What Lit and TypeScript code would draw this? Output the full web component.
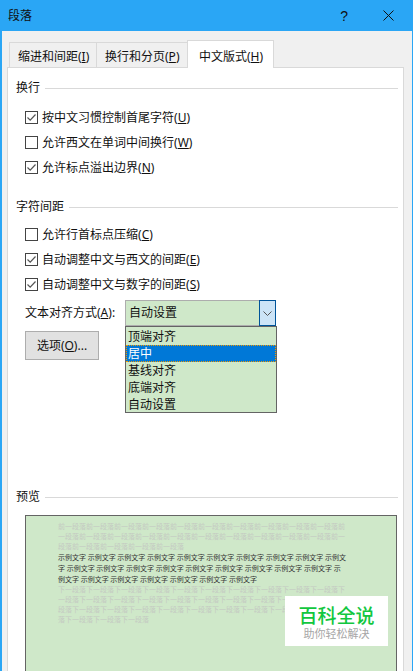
import { LitElement, html, svg, css } from "lit";
import { customElement } from "lit/decorators.js";

@customElement("app-root")
export class AppRoot extends LitElement {
  static styles = css`
    :host { display: block; width: 413px; height: 671px; overflow: hidden; font: 12px/16px "Noto Sans", "Noto Sans CJK SC", sans-serif; color: #111; }
    * { box-sizing: border-box; }
    .win { position: relative; width: 413px; height: 671px; background: #f0f0f0; border-left: 2px solid #2aa6f5; border-right: 1px solid #2aa6f5; display: flex; flex-direction: column; overflow: hidden; }
    .title { height: 31px; margin: 0 -1px 0 -2px; background: #2aa6f5; display: flex; align-items: center; padding: 0 19px 0 8px; flex: none; }
    .title .name { flex: 1; font-size: 12px; }
    .title .help { font-size: 14px; margin-right: 35px; font-family: "Liberation Sans", sans-serif; }
    .title svg { display: block; }
    .tabs { display: flex; align-items: flex-end; height: 36px; padding-left: 7px; flex: none; }
    .tab { height: 25px; padding: 6px 8px 0; border: 1px solid #d9d9d9; border-bottom: none; margin-right: -1px; white-space: nowrap; background: #f0f0f0; }
    .tab.t1 { width: 88px; }
    .tab.t2 { width: 92px; }
    .tab.on { height: 28px; width: 87px; background: #fff; margin-bottom: -1px; position: relative; z-index: 1; padding: 8px 0 0 11px; border-width: 1px 1px 0; }
    .panel { flex: 1; margin: 0 8px 0 5px; background: #fff; border: 1px solid #d9d9d9; padding: 12px 5px 0 8px; position: relative; }
    .head { display: flex; align-items: center; gap: 5px; height: 16px; }
    .head::after { content: ""; flex: 1; height: 1px; background: #d9d9d9; }
    .group { margin: 9px 0 0 9px; }
    .group.second { margin-top: 7px; }
    .row { height: 25px; display: flex; align-items: center; gap: 4px; white-space: nowrap; }
    .box { width: 13px; height: 13px; flex: none; display: block; }
    u { text-underline-offset: 1px; }
    .gap2 { margin-top: 19px; }
    .combo-row { display: flex; align-items: center; margin: 3px 0 0 9px; height: 26px; position: relative; }
    .combo-row label { width: 100px; flex: none; }
    .combo { width: 151px; height: 26px; background: #cfe8c9; border: 1px solid #adadad; display: flex; align-items: center; padding-left: 3px; justify-content: space-between; }
    .arrow { width: 17px; height: 26px; margin: -1px -1px -1px 0; background: #cce4f7; border: 1px solid #005499; display: flex; align-items: center; justify-content: center; flex: none; }
    .list { position: absolute; left: 100px; top: 26px; width: 152px; height: 87px; background: #cfe8c9; border: 1px solid #646464; z-index: 3; padding-top: 1px; }
    .opt { height: 17px; line-height: 17px; padding-left: 2px; }
    .opt.sel { background: #0078d7; color: #fff; border: 1px dotted #f29a00; line-height: 15px; padding-left: 1px; }
    .btn { width: 74px; height: 29px; margin: 5px 0 0 9px; background: #e1e1e1; border: 1px solid #adadad; display: flex; align-items: center; justify-content: center; }
    .preview-head { margin-top: 129px; }
    .preview { margin: 10px 0 0 9px; width: 372px; height: 170px; background: #cfe8c9; border: 1px solid #646464; padding: 6px 49px 0 32px; font-size: 7px; position: relative; overflow: hidden; }
    .p { line-height: 10px; color: #c4c8c2; word-break: break-all; }
    .s { line-height: 11px; color: #333; word-break: break-all; word-spacing: -0.15px; }
    .mark { position: absolute; left: 283px; top: 596px; width: 103px; height: 50px; background: #fff; z-index: 4; display: flex; flex-direction: column; align-items: center; padding-top: 9px; }
    .mark b { font-size: 19px; line-height: 22px; color: #12c73e; font-weight: 500; }
    .mark span { font-size: 11px; line-height: 14px; color: #a6a6a6; }
  `;

  private check(on: boolean) {
    return html`<svg class="box" viewBox="0 0 13 13" aria-hidden="true">
      <rect x=".5" y=".5" width="12" height="12" fill="#fff" stroke="#444"></rect>
      ${on ? svg`<path d="M2.5 6.5 L5.2 9.2 L10.5 3.5" fill="none" stroke="#555" stroke-width="1.2"></path>` : ""}
    </svg>`;
  }

  private row(on: boolean, text: string, key: string) {
    return html`<div class="row">${this.check(on)}<span>${text}(<u>${key}</u>)</span></div>`;
  }

  render() {
    return html`<div class="win">
      <div class="title">
        <span class="name">段落</span>
        <span class="help">?</span>
        <svg width="11" height="11" viewBox="0 0 11 11"><path d="M.5 .5 L10.5 10.5 M10.5 .5 L.5 10.5" stroke="#111" fill="none"></path></svg>
      </div>
      <div class="tabs">
        <div class="tab t1">缩进和间距(<u>I</u>)</div>
        <div class="tab t2">换行和分页(<u>P</u>)</div>
        <div class="tab on">中文版式(<u>H</u>)</div>
      </div>
      <div class="panel">
        <div class="head">换行</div>
        <div class="group">
          ${this.row(true, "按中文习惯控制首尾字符", "U")}
          ${this.row(false, "允许西文在单词中间换行", "W")}
          ${this.row(true, "允许标点溢出边界", "N")}
        </div>
        <div class="head gap2">字符间距</div>
        <div class="group second">
          ${this.row(false, "允许行首标点压缩", "C")}
          ${this.row(true, "自动调整中文与西文的间距", "E")}
          ${this.row(true, "自动调整中文与数字的间距", "S")}
        </div>
        <div class="combo-row">
          <label>文本对齐方式(<u>A</u>):</label>
          <div class="combo">
            <span>自动设置</span>
            <span class="arrow"><svg width="9" height="5" viewBox="0 0 9 5"><path d="M.5 .5 L4.5 4.5 L8.5 .5" fill="none" stroke="#555"></path></svg></span>
          </div>
          <div class="list">
            <div class="opt">顶端对齐</div>
            <div class="opt sel">居中</div>
            <div class="opt">基线对齐</div>
            <div class="opt">底端对齐</div>
            <div class="opt">自动设置</div>
          </div>
        </div>
        <div class="btn">选项(<u>O</u>)...</div>
        <div class="head preview-head">预览</div>
        <div class="preview">
          <div class="p">${"前一段落".repeat(25)}</div>
          <div class="s">${"示例文字 ".repeat(26)}</div>
          <div class="p">${"下一段落".repeat(34)}</div>
        </div>
      </div>
      <div class="mark"><b>百科全说</b><span>助你轻松解决</span></div>
    </div>`;
  }
}
